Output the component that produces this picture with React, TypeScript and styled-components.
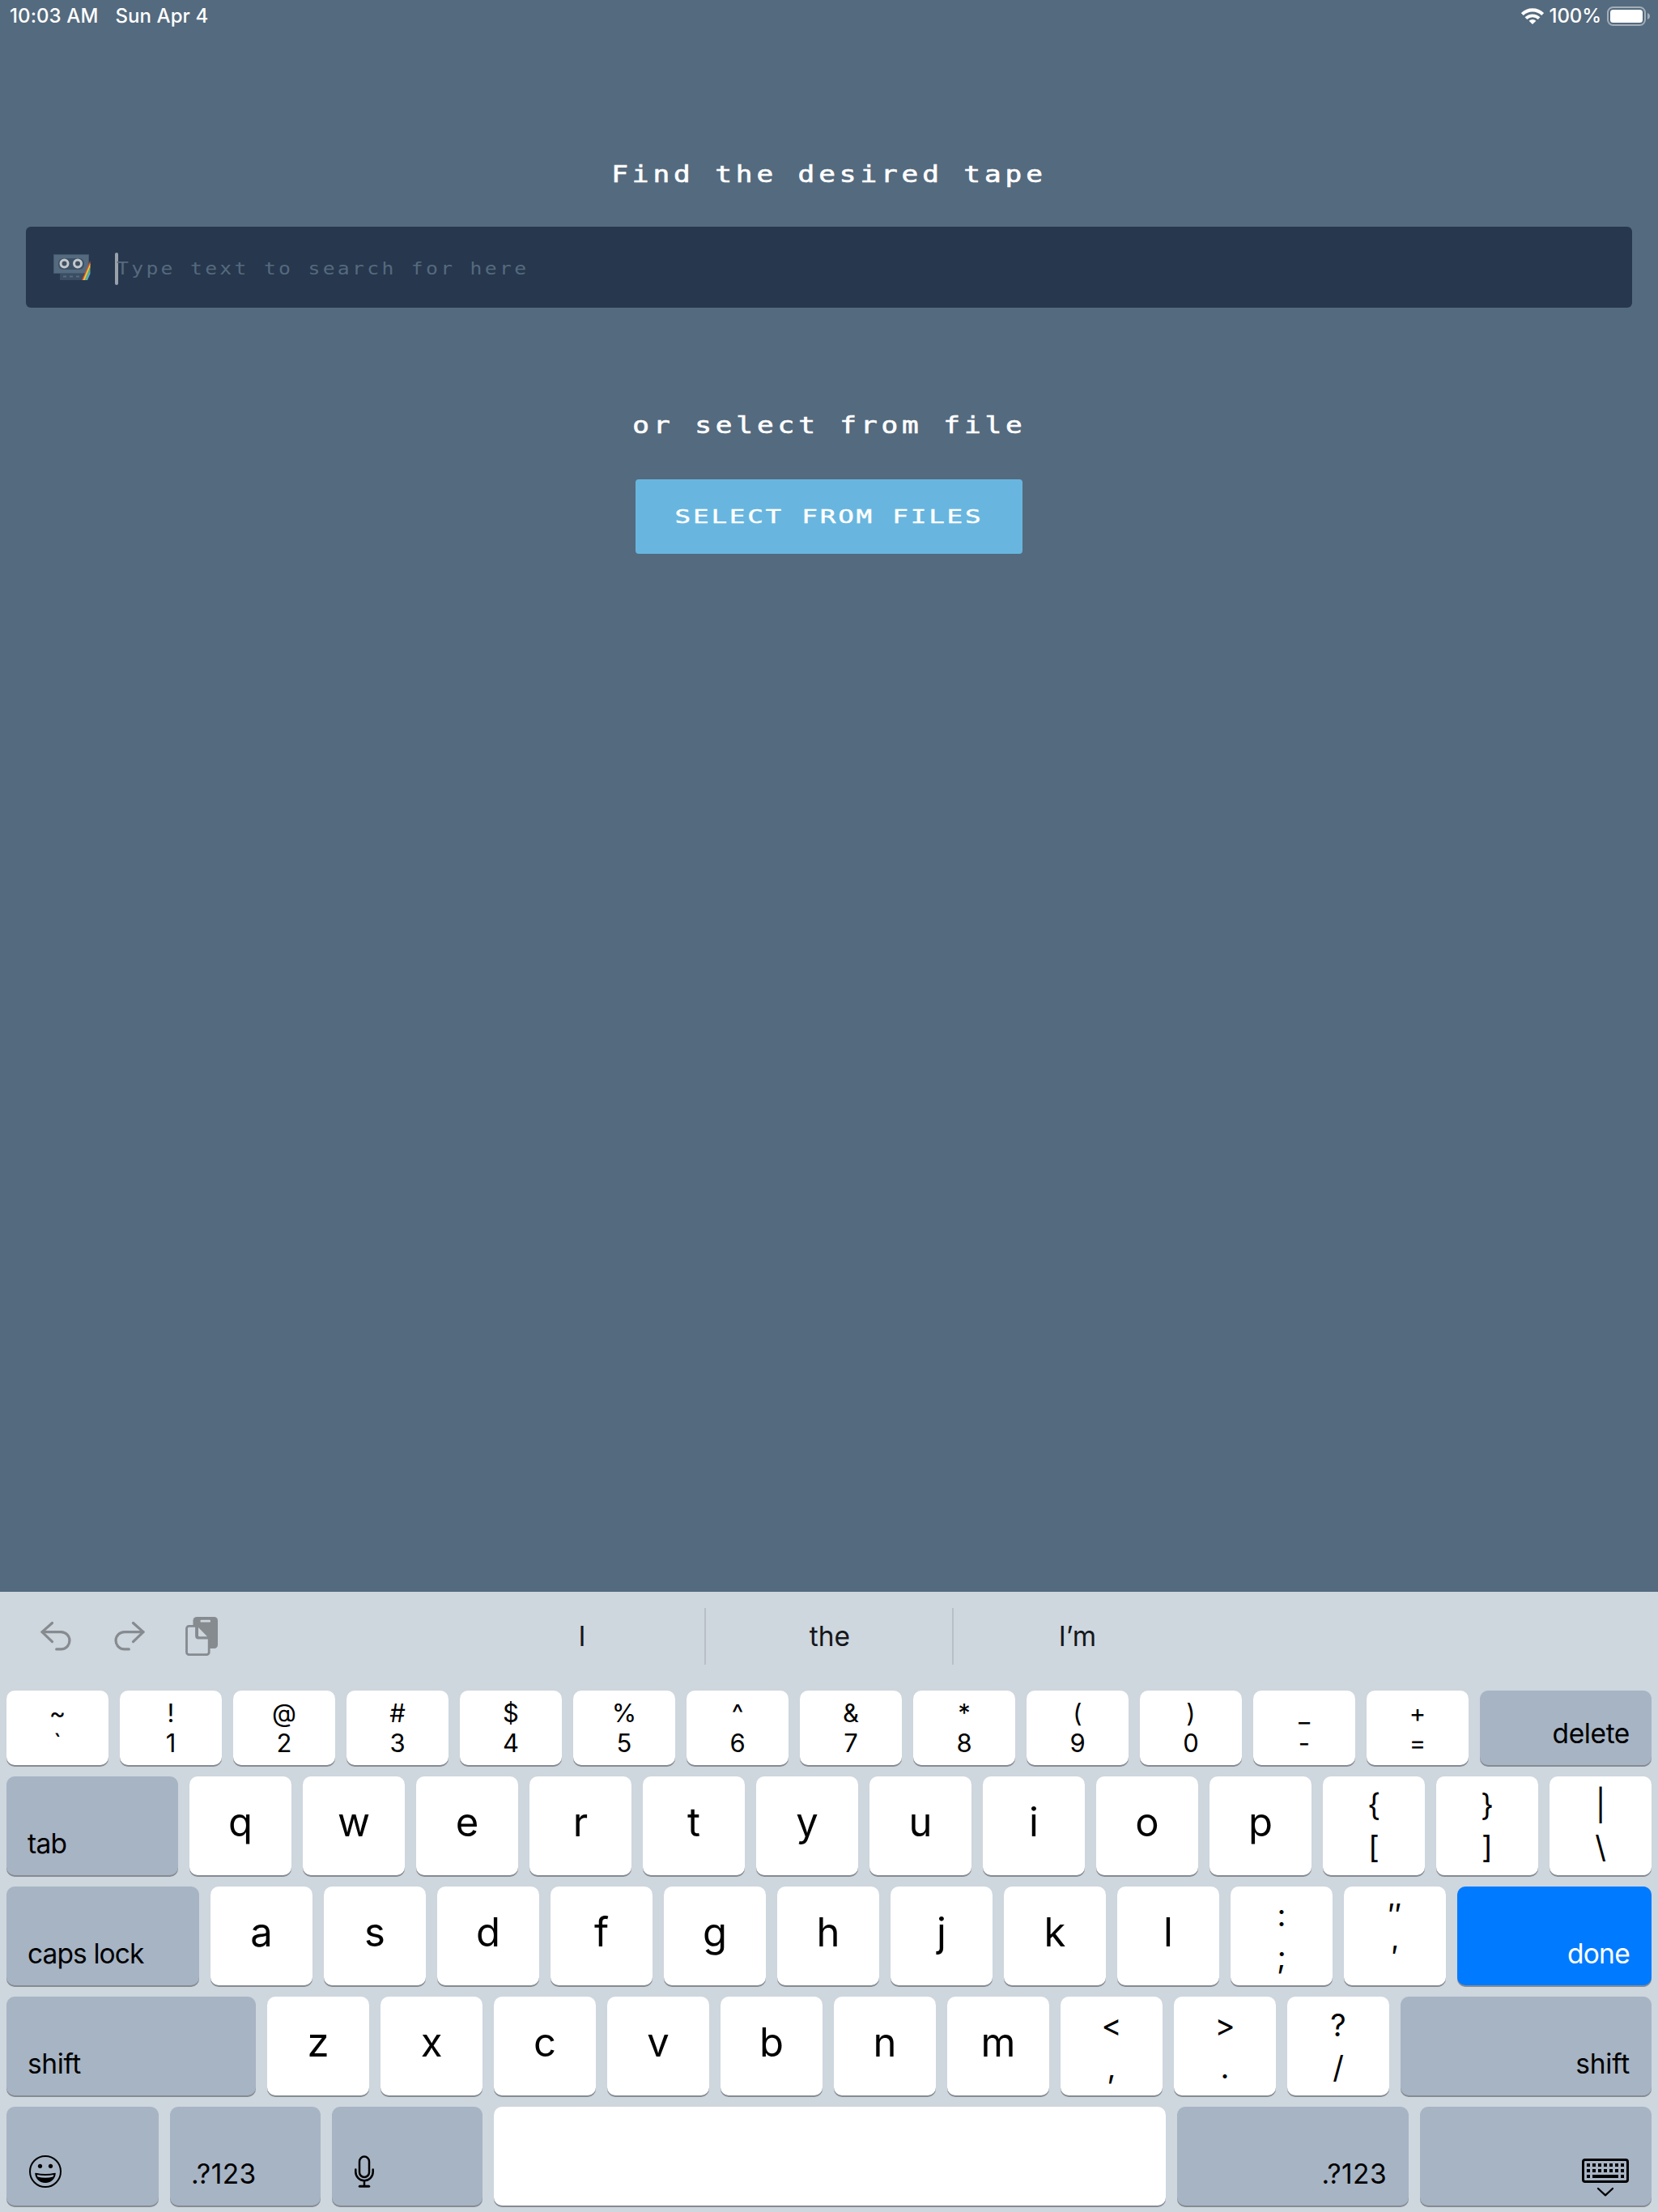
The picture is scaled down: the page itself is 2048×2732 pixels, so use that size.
import React from "react";
import styled, { createGlobalStyle, css } from "styled-components";

const sans = `Inter, "Liberation Sans", sans-serif`;
const mono = `"DejaVu Sans Mono", "Liberation Mono", monospace`;

const GlobalStyle = createGlobalStyle`
  *, *::before, *::after { box-sizing: border-box; }
  html, body { margin: 0; padding: 0; background: #546a7e; }
  svg { display: block; flex: none; }
`;

const Screen = styled.div`
  width: 2048px;
  height: 2732px;
  overflow: hidden;
  display: flex;
  flex-direction: column;
  background: #546a7e;
  font-family: ${sans};
`;

/* ---------- status bar ---------- */

const StatusBar = styled.header`
  height: 40px;
  flex: none;
  display: flex;
  justify-content: space-between;
  padding: 0 9px 0 12px;
  color: #fff;
  font-size: 24px;
  line-height: 40px;
  font-weight: 500;
`;

const StatusGroup = styled.div<{ $gap: number }>`
  display: flex;
  align-items: center;
  gap: ${(p) => p.$gap}px;
`;

const StatusText = styled.span<{ $spacing: number }>`
  white-space: nowrap;
  letter-spacing: ${(p) => p.$spacing}px;
`;

/* ---------- main content ---------- */

const Main = styled.main`
  flex: 1;
  display: flex;
  flex-direction: column;
  align-items: center;
  padding: 145px 32px 0;
`;

const PixelText = styled.span<{ $stretch: number; $spacing: number }>`
  display: block;
  font-family: ${mono};
  letter-spacing: ${(p) => p.$spacing}px;
  white-space: pre;
  transform: scaleX(${(p) => p.$stretch});
`;

const Heading = styled.h1`
  margin: 0;
  height: 60px;
  line-height: 60px;
  font-size: 27.5px;
  font-weight: 400;
  color: #fff;
  padding-left: 1px;
  -webkit-text-stroke: 0.6px #fff;
`;

const SearchField = styled.div`
  align-self: stretch;
  height: 100px;
  margin: 35px 0 115px;
  padding-left: 34px;
  display: flex;
  align-items: center;
  border-radius: 6px;
  background: #27374d;
`;

const Caret = styled.i`
  width: 4px;
  height: 40px;
  margin: 4px -2px 0 30px;
  border-radius: 2px;
  background: #9ba1ab;
`;

const Placeholder = styled.div`
  font-size: 20.6px;
  line-height: 100px;
  padding-top: 3px;
  color: #546a7e;
  & > span { transform-origin: left center; }
`;

const FileButton = styled.button`
  width: 478px;
  height: 92px;
  margin-top: 37px;
  padding: 0;
  border: 0;
  border-radius: 4px;
  display: flex;
  justify-content: center;
  background: #68b6df;
  color: #fff;
  font-size: 23.3px;
  line-height: 92px;
  -webkit-text-stroke: 0.4px #fff;
`;

/* ---------- keyboard ---------- */

const Keyboard = styled.section`
  height: 766px;
  flex: none;
  padding: 0 8px 8px;
  background: #ced6de;
`;

const Toolbar = styled.div`
  height: 122px;
  display: grid;
  grid-template-columns: 556px 306px 306px 306px;
  align-items: start;
  padding-top: 20px;
`;

const Tools = styled.div`
  display: flex;
  align-items: flex-start;
  padding: 9px 0 0 41px;
  color: #868b8f;
`;

const ToolIcon = styled.svg<{ $drop?: number; $after?: number }>`
  margin: ${(p) => p.$drop ?? 0}px ${(p) => p.$after ?? 0}px 0 0;
`;

const Suggestion = styled.div<{ $divided?: boolean }>`
  height: 70px;
  line-height: 70px;
  padding-left: 2px;
  text-align: center;
  font-size: 33.5px;
  color: #15181b;
  border-left: 2px solid ${(p) => (p.$divided ? "#b8bfc7" : "transparent")};
`;

const Rows = styled.div`
  display: grid;
  grid-template-rows: 92px repeat(4, 122px);
  row-gap: 14px;
`;

const Row = styled.div`
  display: flex;
  gap: 14px;
`;

type Tone = "light" | "dark" | "blue";

const tones: Record<Tone, string> = {
  light: "#ffffff",
  dark: "#a7b4c4",
  blue: "#007aff",
};

const Cap = styled.div<{ $tone?: Tone; $width?: number }>`
  width: ${(p) => p.$width ?? 126}px;
  flex: none;
  display: flex;
  flex-direction: column;
  border-radius: 10px;
  background: ${(p) => tones[p.$tone ?? "light"]};
  box-shadow: 0 2px 0 #868b92;
  color: ${(p) => (p.$tone === "blue" ? "#fff" : "#000")};
`;

const LetterCap = styled(Cap)`
  align-items: center;
  font-size: 49px;
  line-height: 114px;
`;

const DualCap = styled(Cap)<{ $small?: boolean }>`
  align-items: center;
  ${(p) =>
    p.$small
      ? css`
          padding-top: 9px;
          font-size: 31px;
          line-height: 37px;
        `
      : css`
          padding-top: 9px;
          font-size: 38px;
          line-height: 52px;
        `}
`;

const LabelCap = styled(Cap)<{ $end?: boolean; $spacing?: number }>`
  justify-content: flex-end;
  align-items: ${(p) => (p.$end ? "flex-end" : "flex-start")};
  padding: 0 27px 19px 26px;
  font-size: 33.5px;
  line-height: 40px;
  letter-spacing: ${(p) => p.$spacing ?? -0.7}px;
  white-space: nowrap;
`;

const IconCap = styled(Cap)<{ $end?: boolean; $bottom: number }>`
  justify-content: flex-end;
  align-items: ${(p) => (p.$end ? "flex-end" : "flex-start")};
  padding: 0 28px ${(p) => p.$bottom}px;
`;

/* ---------- icons ---------- */

const WifiIcon = () => (
  <svg width="28" height="20" viewBox="0 0 28 20" fill="none" stroke="#fff" strokeWidth="4.200">
    <path d="M1.300 7.600a18 18 0 0 1 25.400 0" />
    <path d="M5.900 12.700a11.400 11.400 0 0 1 16.200 0" strokeWidth="3.800" />
    <path d="M14 20l-4.400-4.300a6.300 6.300 0 0 1 8.800 0z" fill="#fff" stroke="none" />
  </svg>
);

const BatteryIcon = () => (
  <svg width="54" height="24" viewBox="0 0 54 24">
    <rect x="1" y="1" width="46" height="22" rx="6.500" fill="none" stroke="#a3aeb9" strokeWidth="2" />
    <rect x="4" y="4" width="40" height="16" rx="3.500" fill="#fff" />
    <path d="M50 8c4 1.200 4 6.800 0 8z" fill="#a3aeb9" />
  </svg>
);

const CassetteIcon = () => (
  <svg width="46" height="32" viewBox="0 0 46 32">
    <rect x="0.500" y="0.500" width="43" height="23" fill="#546a7e" stroke="#44596e" />
    <rect x="6" y="5" width="32" height="14" rx="6" fill="#3d5166" />
    <circle cx="13.500" cy="11.500" r="4.500" fill="#3f5062" stroke="#c3c8cc" strokeWidth="3" />
    <circle cx="30" cy="11.500" r="4.500" fill="#3f5062" stroke="#c3c8cc" strokeWidth="3" />
    <path d="M8 24h30l-1 8H8z" fill="#3a4d62" />
    <path d="M12 27.500h4M20 27.500h4M28 27.500h4" stroke="#566b80" strokeWidth="2" />
    <path d="M45.500 8v5L37 32h-2z" fill="#d9532f" />
    <path d="M45.500 11v5L39 32h-2.500z" fill="#f2c443" />
    <path d="M45.500 15v5L41 32h-2.500z" fill="#63b26d" />
    <path d="M45.500 20v4L42 32h-2z" fill="#5aa7d6" />
  </svg>
);

const UndoIcon = ({ flip }: { flip?: boolean }) => (
  <ToolIcon
    $drop={5}
    $after={flip ? 48 : 51}
    width="40"
    height="42"
    viewBox="0 0 40 42"
    fill="none"
    stroke="currentColor"
    strokeWidth="3.200"
    strokeLinecap="round"
    strokeLinejoin="round"
  >
    <g transform={flip ? "translate(40 0) scale(-1 1)" : undefined}>
      <path d="M15.500 4.500L3 15.600l12.500 12" />
      <path d="M3 15.600h23.300a10.600 10.600 0 0 1 0 21.300h-5.600" />
    </g>
  </ToolIcon>
);

const PasteIcon = () => (
  <ToolIcon width="42" height="52" viewBox="0 0 42 52">
    <rect x="10.500" y="2" width="30.500" height="39" rx="4.500" fill="currentColor" />
    <rect x="19.500" y="5.800" width="12.500" height="2.800" rx="1.200" fill="#ced6de" />
    <path
      d="M14.500 13.300H5.500a3 3 0 0 0-3 3v29.400a3 3 0 0 0 3 3h21.700a3 3 0 0 0 3-3V28h-13.200a2.500 2.500 0 0 1-2.500-2.500z"
      fill="#ced6de"
      stroke="currentColor"
      strokeWidth="2.800"
      strokeLinejoin="round"
    />
    <path d="M17 15L28 26.300H18.300a1.300 1.300 0 0 1-1.300-1.300z" fill="#ced6de" />
  </ToolIcon>
);

const SmileIcon = () => (
  <svg width="40" height="40" viewBox="0 0 40 40">
    <circle cx="20" cy="20" r="19" fill="none" stroke="#000" strokeWidth="2" />
    <circle cx="13.500" cy="13.300" r="2.600" />
    <circle cx="26.500" cy="13.300" r="2.600" />
    <path d="M7.800 22.300q12.200 2.800 24.400 0c-.5 6.500-5.700 11.200-12.200 11.200S8.300 28.800 7.800 22.300z" stroke="#000" strokeWidth="1.200" strokeLinejoin="round" />
    <path d="M9.600 24q10.400 1.900 20.800 0l-.9 2.600q-9.500 2.400-19 0z" fill="#a7b4c4" />
  </svg>
);

const MicIcon = () => (
  <svg width="24" height="40" viewBox="0 0 24 40" fill="none" stroke="#000" strokeWidth="2.500" strokeLinecap="round">
    <rect x="6" y="1.600" width="12" height="25.400" rx="6" />
    <path d="M1.300 17.500v3a10.700 10.700 0 0 0 21.400 0v-3M12 31.500v6.500" />
    <path d="M6.300 38.300h11.400" strokeWidth="3" />
  </svg>
);

const HideKeyboardIcon = () => {
  const cols = [0, 1, 2, 3, 4, 5, 6];
  return (
    <svg width="58" height="48" viewBox="0 0 58 48">
      <rect x="1.500" y="1.500" width="55" height="27" rx="2.500" fill="none" stroke="#000" strokeWidth="3" />
      {cols.map((c) => (
        <React.Fragment key={c}>
          <rect x={6 + c * 7} y="6" width="4" height="4" />
          <rect x={6 + c * 7} y="13" width="4" height="4" />
        </React.Fragment>
      ))}
      <rect x="6" y="20" width="4" height="4" />
      <rect x="13" y="20" width="32" height="4" />
      <rect x="48" y="20" width="4" height="4" />
      <path d="M20 37l9 8.300L38 37" fill="none" stroke="#000" strokeWidth="2.300" strokeLinecap="round" strokeLinejoin="round" />
    </svg>
  );
};

/* ---------- key data ---------- */

const numberKeys = ["~`", "!1", "@2", "#3", "$4", "%5", "^6", "&7", "*8", "(9", ")0", "_-", "+="];

const Letters = ({ keys }: { keys: string }) => (
  <>
    {keys.split("").map((k) => (
      <LetterCap key={k}>{k}</LetterCap>
    ))}
  </>
);

const Duals = ({ keys, small }: { keys: string[]; small?: boolean }) => (
  <>
    {keys.map((k) => (
      <DualCap key={k} $small={small}>
        <span>{k[0]}</span>
        <span>{k[1]}</span>
      </DualCap>
    ))}
  </>
);

export default function App() {
  return (
    <Screen>
      <GlobalStyle />
      <StatusBar>
        <StatusGroup $gap={21}>
          <StatusText $spacing={0.1}>10:03 AM</StatusText>
          <StatusText $spacing={0.1}>Sun Apr 4</StatusText>
        </StatusGroup>
        <StatusGroup $gap={7}>
          <WifiIcon />
          <StatusText $spacing={-0.1}>100%</StatusText>
          <BatteryIcon />
        </StatusGroup>
      </StatusBar>

      <Main>
        <Heading>
          <PixelText $stretch={1.25} $spacing={3.92}>Find the desired tape</PixelText>
        </Heading>
        <SearchField>
          <CassetteIcon />
          <Caret />
          <Placeholder>
            <PixelText $stretch={1.2} $spacing={2.76}>Type text to search for here</PixelText>
          </Placeholder>
        </SearchField>
        <Heading as="h2">
          <PixelText $stretch={1.25} $spacing={3.92}>or select from file</PixelText>
        </Heading>
        <FileButton>
          <PixelText $stretch={1.4} $spacing={1.97}>SELECT FROM FILES</PixelText>
        </FileButton>
      </Main>

      <Keyboard>
        <Toolbar>
          <Tools>
            <UndoIcon />
            <UndoIcon flip />
            <PasteIcon />
          </Tools>
          <Suggestion>I</Suggestion>
          <Suggestion $divided>the</Suggestion>
          <Suggestion $divided>I’m</Suggestion>
        </Toolbar>
        <Rows>
          <Row>
            <Duals keys={numberKeys} small />
            <LabelCap $tone="dark" $width={212} $end $spacing={-0.4}>delete</LabelCap>
          </Row>
          <Row>
            <LabelCap $tone="dark" $width={212}>tab</LabelCap>
            <Letters keys="qwertyuiop" />
            <Duals keys={["{[", "}]", "|\\"]} />
          </Row>
          <Row>
            <LabelCap $tone="dark" $width={238} $spacing={-0.9}>caps lock</LabelCap>
            <Letters keys="asdfghjkl" />
            <Duals keys={[":;", "″′"]} />
            <LabelCap $tone="blue" $width={240} $end>done</LabelCap>
          </Row>
          <Row>
            <LabelCap $tone="dark" $width={308} $spacing={-0.4}>shift</LabelCap>
            <Letters keys="zxcvbnm" />
            <Duals keys={["<,", ">.", "?/"]} />
            <LabelCap $tone="dark" $width={310} $end $spacing={-0.2}>shift</LabelCap>
          </Row>
          <Row>
            <IconCap $tone="dark" $width={188} $bottom={22}>
              <SmileIcon />
            </IconCap>
            <LabelCap $tone="dark" $width={186} $spacing={0.4}>.?123</LabelCap>
            <IconCap $tone="dark" $width={186} $bottom={22}>
              <MicIcon />
            </IconCap>
            <Cap $width={830} />
            <LabelCap $tone="dark" $width={286} $end $spacing={0.4}>.?123</LabelCap>
            <IconCap $tone="dark" $width={286} $bottom={10} $end>
              <HideKeyboardIcon />
            </IconCap>
          </Row>
        </Rows>
      </Keyboard>
    </Screen>
  );
}
